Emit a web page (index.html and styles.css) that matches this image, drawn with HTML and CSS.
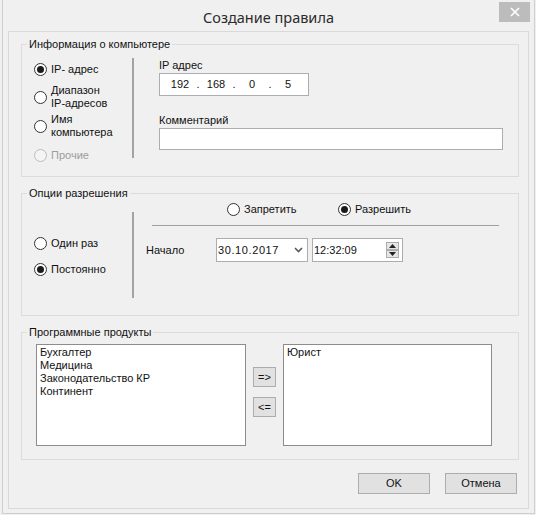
FILE: index.html
```html
<!DOCTYPE html>
<html>
	<head>
		<meta charset="utf-8">
		<title>Создание правила</title>
		<link rel="stylesheet" href="styles.css">
	</head>
	<body>
		<div class="window">
			<div class="titlebar">
				<div class="title">Создание правила</div>
				<div class="close">
					<svg width="12" height="10" viewBox="0 0 12 10"><path d="M2 1 L10 9 M10 1 L2 9" stroke="#fff" stroke-width="1.6" fill="none"/></svg>
				</div>
			</div>
			<div class="client">
				<!-- информация о компьютере -->
				<fieldset class="group group-pc">
					<legend>Информация о компьютере</legend>
					<div class="cols">
						<div class="options">
							<div class="opt opt1"><span class="radio on"></span><span>IP- адрес</span></div>
							<div class="opt opt2"><span class="radio"></span><span>Диапазон<br>IP-адресов</span></div>
							<div class="opt opt3"><span class="radio"></span><span>Имя<br>компьютера</span></div>
							<div class="opt opt4 disabled"><span class="radio"></span><span>Прочие</span></div>
						</div>
						<div class="vsep"></div>
						<div class="fields">
							<div class="caption">IP адрес</div>
							<div class="ipbox">
								<span class="oct">192</span><span class="dot">.</span>
								<span class="oct">168</span><span class="dot">.</span>
								<span class="oct">0</span><span class="dot">.</span>
								<span class="oct">5</span>
							</div>
							<div class="caption">Комментарий</div>
							<div class="textbox"></div>
						</div>
					</div>
				</fieldset>

				<!-- опции разрешения -->
				<fieldset class="group group-perm">
					<legend>Опции разрешения</legend>
					<div class="cols">
						<div class="options">
							<div class="opt once"><span class="radio"></span><span>Один раз</span></div>
							<div class="opt always"><span class="radio on"></span><span>Постоянно</span></div>
						</div>
						<div class="vsep"></div>
						<div class="perm">
							<div class="choice">
								<div class="opt deny"><span class="radio"></span><span>Запретить</span></div>
								<div class="opt"><span class="radio on"></span><span>Разрешить</span></div>
							</div>
							<div class="hline"></div>
							<div class="start">
								<div class="start-label">Начало</div>
								<div class="datebox">
									<span>30.10.2017</span>
									<svg class="chev" width="9" height="6" viewBox="0 0 9 6"><path d="M1 1 L4.5 4.5 L8 1" stroke="#5a5a5a" stroke-width="1.6" fill="none"/></svg>
								</div>
								<div class="timebox">
									<span>12:32:09</span>
									<div class="spin">
										<div class="spin-btn"><svg width="7" height="4" viewBox="0 0 7 4"><path d="M0 4 L3.5 0 L7 4 Z" fill="#222"/></svg></div>
										<div class="spin-btn"><svg width="7" height="4" viewBox="0 0 7 4"><path d="M0 0 L3.5 4 L7 0 Z" fill="#222"/></svg></div>
									</div>
								</div>
							</div>
						</div>
					</div>
				</fieldset>

				<!-- программные продукты -->
				<fieldset class="group group-prod">
					<legend>Программные продукты</legend>
					<div class="prod">
						<ul class="list">
							<li>Бухгалтер</li>
							<li>Медицина</li>
							<li>Законодательство КР</li>
							<li>Континент</li>
						</ul>
						<div class="move">
							<button class="btn small">=&gt;</button>
							<button class="btn small">&lt;=</button>
						</div>
						<ul class="list">
							<li>Юрист</li>
						</ul>
					</div>
				</fieldset>

				<div class="actions">
					<button class="btn">OK</button>
					<button class="btn">Отмена</button>
				</div>
			</div>
		</div>
	</body>
</html>
```

FILE: styles.css
```css
*{
	margin: 0;
	padding: 0;
	box-sizing: border-box;
}
body{
	background: #f0f0f0;
	font-family: "Liberation Sans", Arial, sans-serif;
	font-size: 11px;
	line-height: 13px;
	color: #111;
}
.window{
	margin-left: 2px;
	width: 533px;
	height: 514px;
	border: 1px solid #cfcfcf;
	border-top: 0;
	background: #f0f0f0;
}
.titlebar{
	height: 31px;
	display: grid;
	grid-template-columns: 1fr auto 1fr;
	align-items: start;
}
.titlebar .title{
	grid-column: 2;
	font-family: "Noto Sans", sans-serif;
	font-size: 14.5px;
	line-height: 20px;
	padding-top: 7px;
	color: #2b2b2b;
}
.titlebar .close{
	grid-column: 3;
	justify-self: end;
	width: 31px;
	height: 20px;
	margin-top: 2px;
	margin-right: 4px;
	background: #bcbcbc;
	display: flex;
	align-items: center;
	justify-content: center;
}
.client{
	margin-left: 5px;
	width: 521px;
	height: 478px;
	border: 1px solid #d9d9d9;
}

/* группы */
.group{
	border: 1px solid #dcdcdc;
	margin: 9.5px 9px 0 12px;
	padding: 0;
	min-width: 0;
}
.group-pc{
	margin-top: 5.5px;
}
.group legend{
	margin-left: 5px;
	padding: 0 2px;
	line-height: 13px;
}
.cols{
	display: flex;
	align-items: flex-start;
	padding-left: 12px;
}
.options{
	width: 98px;
}
.opt{
	display: flex;
	align-items: center;
	gap: 4px;
}
.radio{
	flex: none;
	width: 13px;
	height: 13px;
	border-radius: 50%;
	border: 1px solid #333;
	background: #fff;
	display: flex;
	align-items: center;
	justify-content: center;
}
.radio.on::after{
	content: "";
	width: 7px;
	height: 7px;
	border-radius: 50%;
	background: #1a1a1a;
}
.disabled{
	color: #9d9d9d;
}
.disabled .radio{
	border-color: #bcbcbc;
	background: #f4f4f4;
}
.vsep{
	flex: none;
	width: 2px;
	background: #a3a3a3;
}

.group-pc .cols{
	padding-bottom: 14px;
}
.group-pc .opt1{ margin-top: 12.5px; }
.group-pc .opt2{ margin-top: 8px; }
.group-pc .opt3{ margin-top: 3px; }
.group-pc .opt4{ margin-top: 10px; }
.group-pc .vsep{
	height: 100px;
	margin-top: 7.5px;
}
.fields{
	width: 344px;
	margin-left: 25px;
	padding-top: 8px;
}
.caption{
	margin-bottom: 1.5px;
}
.ipbox{
	width: 150px;
	height: 23px;
	border: 1px solid #abadb3;
	background: #fff;
	display: flex;
	align-items: center;
	padding-left: 8px;
	margin-bottom: 17.5px;
}
.ipbox .oct{
	width: 24px;
	text-align: center;
}
.ipbox .dot{
	width: 12px;
	text-align: center;
}
.textbox{
	height: 22px;
	border: 1px solid #abadb3;
	background: #fff;
}

.group-perm .cols{
	padding-bottom: 17px;
}
.group-perm .once{ margin-top: 37px; }
.group-perm .always{ margin-top: 13px; }
.group-perm .vsep{
	height: 86px;
	margin-top: 12.5px;
}
.perm{
	flex: 1;
	margin-left: 12px;
	margin-right: 19px;
}
.choice{
	display: flex;
	margin-top: 3px;
	padding-left: 81px;
}
.choice .deny{
	width: 111px;
}
.hline{
	margin-top: 9.5px;
	margin-left: 6px;
	border-top: 1px solid #a0a0a0;
}
.start{
	display: flex;
	align-items: center;
	margin-top: 12px;
}
.start-label{
	width: 70px;
}
.datebox, .timebox{
	height: 24px;
	border: 1px solid #abadb3;
	background: #fff;
	display: flex;
	align-items: center;
	justify-content: space-between;
	padding-left: 1px;
}
.datebox{
	width: 92px;
	padding-right: 4px;
	letter-spacing: 0.6px;
}
.timebox{
	width: 91px;
	margin-left: 4px;
	padding-right: 3px;
}
.spin{
	display: flex;
	flex-direction: column;
}
.spin-btn{
	width: 13px;
	height: 8px;
	border: 1px solid #acacac;
	background: #e5e5e5;
	display: flex;
	align-items: center;
	justify-content: center;
}

.prod{
	display: flex;
	align-items: flex-start;
	padding: 5.5px 24px 13px 14px;
}
.list{
	list-style: none;
	width: 210px;
	height: 102px;
	border: 1px solid #8c8c8c;
	background: #fff;
	padding: 0.5px 3px;
	line-height: 13.33px;
}
.list:last-child{
	width: 209px;
}
.move{
	display: flex;
	flex-direction: column;
	gap: 10px;
	margin: 23px 7px 0 7px;
}
.btn{
	font: inherit;
	color: #111;
	width: 72px;
	height: 21px;
	border: 1px solid #adadad;
	background: #e1e1e1;
	text-align: center;
}
.btn.small{
	width: 23px;
	height: 20px;
}
.actions{
	display: flex;
	justify-content: flex-end;
	gap: 15px;
	margin-top: 13px;
	padding-right: 11px;
}
```
